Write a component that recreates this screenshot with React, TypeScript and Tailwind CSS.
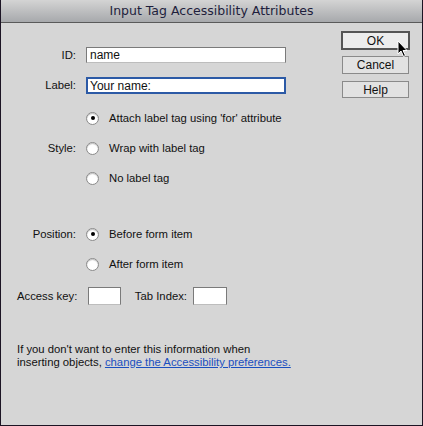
import React from 'react';

const font = { fontFamily: '"Liberation Sans", Arial, sans-serif' };

function Radio({ checked, label }: { checked?: boolean; label: string }) {
  return (
    <div className="flex items-center">
      <span className="w-[13px] h-[13px] rounded-full bg-white border border-[#8a8a8a] shadow-[inset_0_1px_1px_rgba(0,0,0,0.25)] flex items-center justify-center shrink-0">
        {checked && <span className="w-[4px] h-[4px] rounded-full bg-black" />}
      </span>
      <span className="ml-[10px] whitespace-nowrap">{label}</span>
    </div>
  );
}

function Row({ label, children, className }: { label?: string; children: React.ReactNode; className: string }) {
  return (
    <div className={`flex items-center ${className}`}>
      <div className="w-[76px] text-right pr-[1px] whitespace-nowrap">{label}</div>
      <div className="ml-[9px] flex items-center">{children}</div>
    </div>
  );
}

export default function App() {
  return (
    <div
      className="w-[423px] h-[426px] bg-[#d6d6d6] border-x border-b border-[#1c1424] flex flex-col text-[11.3px] text-[#111] overflow-hidden"
      style={font}
    >
      {/* title bar */}
      <div className="h-[23px] shrink-0 bg-gradient-to-b from-[#d4d4d4] to-[#a7a9ac] border-b border-[#5a5a5a] flex items-center justify-center">
        <span className="text-[12.5px] text-[#1e1e3c]" style={{ fontFamily: '"DejaVu Sans", sans-serif' }}>
          Input Tag Accessibility Attributes
        </span>
      </div>

      <div className="flex flex-1 relative">
        <div className="flex-1 flex flex-col">
          <Row label="ID:" className="mt-[24px] h-[16px]">
            <div className="w-[200px] h-[16px] bg-white border border-[#7a7a7a] border-b-[#bdbdbd] border-b-dotted flex items-center pl-[3px] text-[12px]">name</div>
          </Row>
          <Row label="Label:" className="mt-[14px] h-[17px]">
            <div className="w-[200px] h-[17px] bg-white border-2 border-[#2c5aa6] flex items-center pl-[2px] text-[12px]">Your name:</div>
          </Row>
          <Row className="mt-[9px] h-[30px]">
            <Radio checked label="Attach label tag using 'for' attribute" />
          </Row>
          <Row label="Style:" className="h-[30px]">
            <Radio label="Wrap with label tag" />
          </Row>
          <Row className="h-[30px]">
            <Radio label="No label tag" />
          </Row>
          <Row label="Position:" className="mt-[26px] h-[30px]">
            <Radio checked label="Before form item" />
          </Row>
          <Row className="h-[30px]">
            <Radio label="After form item" />
          </Row>
          <div className="mt-[8px] h-[18px] flex items-center">
            <span className="ml-[16px] w-[60px] shrink-0 text-right whitespace-nowrap">Access key:</span>
            <div className="ml-[11px] w-[33px] h-[18px] shrink-0 bg-white border border-[#7a7a7a] border-b-[#bdbdbd] border-b-dotted" />
            <span className="w-[66px] shrink-0 text-right whitespace-nowrap">Tab Index:</span>
            <div className="ml-[6px] w-[34px] h-[18px] shrink-0 bg-white border border-[#7a7a7a] border-b-[#bdbdbd] border-b-dotted" />
          </div>
          <div className="mt-[38px] ml-[16px] leading-[13px] whitespace-nowrap">
            <div>If you don't want to enter this information when</div>
            <div>
              inserting objects,{' '}
              <span className="text-[#1a4fc0] underline">change the Accessibility preferences.</span>
            </div>
          </div>
        </div>

        <div className="w-[69px] mr-[12px] mt-[8px] flex flex-col gap-[6px]">
          <div className="h-[19px] border-2 border-[#555] bg-[#ececec] flex items-center justify-center text-[12px]">OK</div>
          <div className="mx-[1px] h-[18px] border border-[#8a8a8a] bg-[#e2e2e2] flex items-center justify-center text-[12px]">Cancel</div>
          <div className="mx-[1px] mt-[1px] h-[17px] border border-[#8a8a8a] bg-[#e2e2e2] flex items-center justify-center text-[12px]">Help</div>
        </div>

        {/* mouse cursor */}
        <svg className="absolute left-[396px] top-[17px]" width="12" height="18" viewBox="0 0 12 18">
          <path d="M1 1 L1 14 L4 11 L6.5 16.5 L8.5 15.5 L6 10.5 L10 10.5 Z" fill="#000" stroke="#fff" strokeWidth="1" />
        </svg>
      </div>
    </div>
  );
}
